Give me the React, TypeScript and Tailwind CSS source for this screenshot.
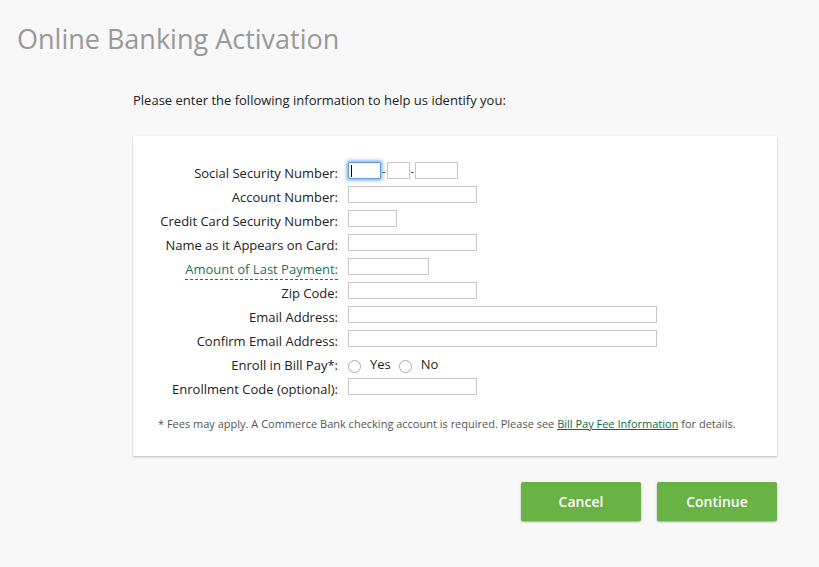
import React from 'react';

const field = 'h-[17px] border border-[#c8c8c8] bg-white';

const Row = ({ label, children, help, center }: { label: string; children: React.ReactNode; help?: boolean; center?: boolean }) => (
  <div className="flex h-[24px]">
    <div className="w-[205px] text-right self-center">
      {help ? (
        <span className="text-[#1a7558] border-b border-dashed border-[#1a7558] pb-[1px]">{label}</span>
      ) : (
        <span>{label}</span>
      )}
    </div>
    {center ? (
      <div className="pl-[10px] flex items-center">{children}</div>
    ) : (
      <div className="pl-[10px] flex items-start">{children}</div>
    )}
  </div>
);

export default function App() {
  return (
    <div
      className="min-h-[567px] w-full bg-[#f8f8f8] text-[#222] text-[13px]"
      style={{ fontFamily: '"Open Sans", sans-serif' }}
    >
      <h1 className="pl-[17px] pt-[21px] text-[27px] leading-[36px] text-[#999]">Online Banking Activation</h1>
      <p className="pl-[133px] pt-[34px] leading-[18px]">Please enter the following information to help us identify you:</p>

      <div className="ml-[133px] mt-[27px] w-[644px] bg-white shadow-[0_1px_2px_rgba(0,0,0,0.25)] pt-[26px] pb-[23px]">
        <Row label="Social Security Number:">
          <div className="h-[17px] w-[33px] border border-[#5b9dd9] rounded-[2px] shadow-[0_0_3px_2px_rgba(80,150,240,0.6)] bg-white flex items-center pl-[2px]">
            <div className="w-px h-[12px] bg-black" />
          </div>
          <span className="px-[1px] text-[11px] leading-[17px]">-</span>
          <div className={`${field} w-[23px]`} />
          <span className="px-[1px] text-[11px] leading-[17px]">-</span>
          <div className={`${field} w-[43px]`} />
        </Row>
        <Row label="Account Number:"><div className={`${field} w-[129px]`} /></Row>
        <Row label="Credit Card Security Number:"><div className={`${field} w-[49px]`} /></Row>
        <Row label="Name as it Appears on Card:"><div className={`${field} w-[129px]`} /></Row>
        <Row label="Amount of Last Payment:" help><div className={`${field} w-[81px]`} /></Row>
        <Row label="Zip Code:"><div className={`${field} w-[129px]`} /></Row>
        <Row label="Email Address:"><div className={`${field} w-[309px]`} /></Row>
        <Row label="Confirm Email Address:"><div className={`${field} w-[309px]`} /></Row>
        <Row label="Enroll in Bill Pay*:" center>
          <span className="w-[13px] h-[13px] rounded-full border border-[#aaa] bg-white" />
          <span className="ml-[9px] -mt-[2px]">Yes</span>
          <span className="ml-[8px] w-[13px] h-[13px] rounded-full border border-[#aaa] bg-white" />
          <span className="ml-[9px] -mt-[2px]">No</span>
        </Row>
        <Row label="Enrollment Code (optional):"><div className={`${field} w-[129px]`} /></Row>

        <p className="pl-[25px] pt-[14px] text-[11px] text-[#555]">
          * Fees may apply. A Commerce Bank checking account is required. Please see{' '}
          <a className="text-[#0b6b4e] underline">Bill Pay Fee Information</a> for details.
        </p>
      </div>

      <div className="ml-[521px] mt-[26px] flex gap-[16px]">
        <button className="w-[120px] h-[39px] bg-[#69b245] text-white text-[14px] font-semibold rounded-[2px] shadow-[0_1px_2px_rgba(0,0,0,0.35)]">Cancel</button>
        <button className="w-[120px] h-[39px] bg-[#69b245] text-white text-[14px] font-semibold rounded-[2px] shadow-[0_1px_2px_rgba(0,0,0,0.35)]">Continue</button>
      </div>
    </div>
  );
}
